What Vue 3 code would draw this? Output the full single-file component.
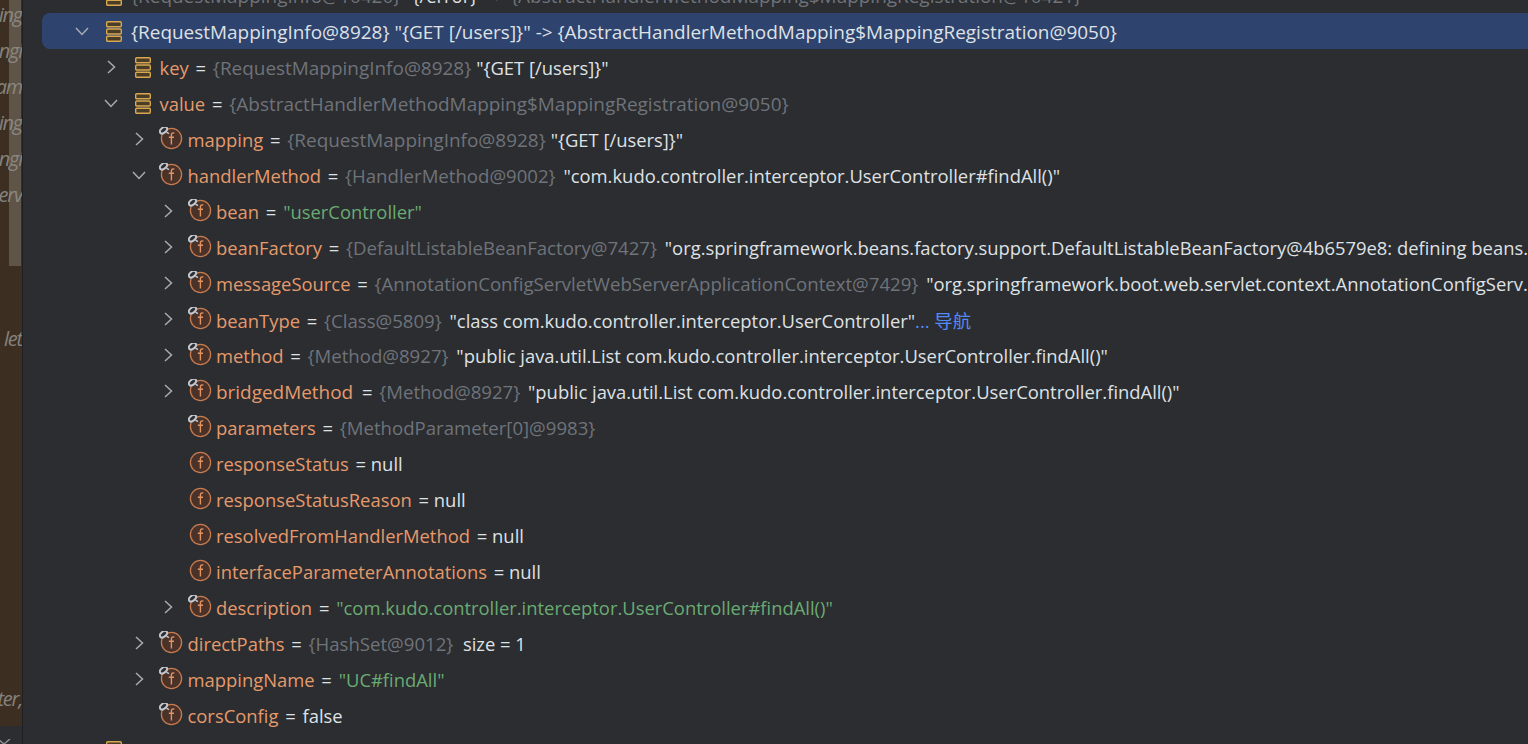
<template>
  <div class="window">
    <aside class="gutter">
      <div class="gutter-list">
        <div v-for="(t, i) in gutterRows" :key="i" class="gutter-row">{{ t }}</div>
      </div>
      <div class="scroll-thumb"></div>
      <div class="gutter-foot">
        <svg width="12" height="6" viewBox="0 0 12 6"><path d="M-2 0l6 5 6-5" fill="none" stroke="#8c8f94" stroke-width="1.5"/></svg>
      </div>
    </aside>
    <main class="tree">
      <div v-for="(row, i) in rows" :key="i" class="row" :class="{ selected: row.selected, field: row.icon !== 'entry' }" :style="{ paddingLeft: rowIndent(row) + 'px' }">
        <span class="arrow">
          <svg v-if="row.arrow === 'open'" width="14" height="14" viewBox="0 0 14 14"><path d="M1 4l6 6.500L13 4" fill="none" stroke="#a8abb0" stroke-width="1.500"/></svg>
          <svg v-else-if="row.arrow === 'closed'" width="14" height="14" viewBox="0 0 14 14"><path d="M4 1l6.500 6L4 13" fill="none" stroke="#a8abb0" stroke-width="1.500"/></svg>
        </span>
        <span class="icon">
          <svg v-if="row.icon === 'entry'" width="16" height="21" viewBox="0 0 16 21">
            <g fill="#4a3d28" stroke="#d9a84e" stroke-width="1.400">
              <rect x=".7" y=".7" width="14.600" height="5" rx="1"/>
              <rect x=".7" y="8" width="14.600" height="5" rx="1"/>
              <rect x=".7" y="15.300" width="14.600" height="5" rx="1"/>
            </g>
          </svg>
          <svg v-else width="24" height="24" viewBox="0 0 24 24">
            <circle cx="12.500" cy="11.500" r="10.100" fill="#4a3228" stroke="#c77b50" stroke-width="1.300"/>
            <path d="M15.300 6.300c-.5-.6-2.600-.7-2.900 1V17.500M9.800 10.300h5.200" fill="none" stroke="#e09465" stroke-width="1.400"/>
            <g v-if="row.icon === 'final'">
              <ellipse cx="4.500" cy="3.200" rx="4.100" ry="2.500" transform="rotate(-40 4.500 3.200)" fill="#2b2d30" stroke="#c3c7cd" stroke-width="2"/>
              <path d="M7.500 5.200l2.500 1.500" stroke="#c3c7cd" stroke-width="1.500"/>
            </g>
          </svg>
        </span>
        <span class="text">
          <span v-if="row.name" class="name" :class="{ long: row.long }">{{ row.name }}</span>
          <span v-if="row.name" class="op"> = </span>
          <span v-for="(p, j) in row.parts" :key="j" :class="p[0]">{{ p[1] }}</span>
        </span>
      </div>
    </main>
  </div>
</template>

<script setup>
const gutterRows = ['ing', 'ngi', 'am', 'ing', 'ngi', 'erv', '', '', '', 'let', '', '', '', '', '', '', '', '', '', 'ter,']

const F = 'final'
const rows = [
  { depth: 0, arrow: 'open', icon: 'entry', parts: [['ref wider', '{RequestMappingInfo@10420} '], ['white', '"{/error}" '], ['ref wider', '-> {AbstractHandlerMethodMapping$MappingRegistration@10421}']] },
  { depth: 0, arrow: 'open', icon: 'entry', selected: true, parts: [['white wider', '{RequestMappingInfo@8928} "{GET [/users]}" -> {AbstractHandlerMethodMapping$MappingRegistration@9050}']] },
  { depth: 1, arrow: 'closed', icon: 'entry', name: 'key', parts: [['ref wider', '{RequestMappingInfo@8928} '], ['white', '"{GET [/users]}"']] },
  { depth: 1, arrow: 'open', icon: 'entry', name: 'value', parts: [['ref wider', '{AbstractHandlerMethodMapping$MappingRegistration@9050}']] },
  { depth: 2, arrow: 'closed', icon: F, name: 'mapping', parts: [['ref wider', '{RequestMappingInfo@8928} '], ['white', '"{GET [/users]}"']] },
  { depth: 2, arrow: 'open', icon: F, name: 'handlerMethod', parts: [['ref wide', '{HandlerMethod@9002} '], ['white', '"com.kudo.controller.interceptor.UserController#findAll()"']] },
  { depth: 3, arrow: 'closed', icon: F, name: 'bean', parts: [['str', '"userController"']] },
  { depth: 3, arrow: 'closed', icon: F, name: 'beanFactory', parts: [['ref wide', '{DefaultListableBeanFactory@7427} '], ['white', '"org.springframework.beans.factory.support.DefaultListableBeanFactory@4b6579e8: defining beans...']] },
  { depth: 3, arrow: 'closed', icon: F, name: 'messageSource', parts: [['ref wide', '{AnnotationConfigServletWebServerApplicationContext@7429} '], ['white', '"org.springframework.boot.web.servlet.context.AnnotationConfigServ...']] },
  { depth: 3, arrow: 'closed', icon: F, name: 'beanType', parts: [['ref wide', '{Class@5809} '], ['white', '"class com.kudo.controller.interceptor.UserController"'], ['link', '... 导航']] },
  { depth: 3, arrow: 'closed', icon: F, name: 'method', parts: [['ref wide', '{Method@8927} '], ['white', '"public java.util.List com.kudo.controller.interceptor.UserController.findAll()"']] },
  { depth: 3, arrow: 'closed', icon: F, name: 'bridgedMethod', long: true, parts: [['ref wide', '{Method@8927} '], ['white', '"public java.util.List com.kudo.controller.interceptor.UserController.findAll()"']] },
  { depth: 3, icon: F, name: 'parameters', parts: [['ref wide', '{MethodParameter[0]@9983}']] },
  { depth: 3, icon: 'field', name: 'responseStatus', parts: [['white nil', 'null']] },
  { depth: 3, icon: 'field', name: 'responseStatusReason', parts: [['white nil', 'null']] },
  { depth: 3, icon: 'field', name: 'resolvedFromHandlerMethod', parts: [['white nil', 'null']] },
  { depth: 3, icon: 'field', name: 'interfaceParameterAnnotations', parts: [['white nil', 'null']] },
  { depth: 3, arrow: 'closed', icon: F, name: 'description', parts: [['str', '"com.kudo.controller.interceptor.UserController#findAll()"']] },
  { depth: 2, arrow: 'closed', icon: F, name: 'directPaths', parts: [['ref wide', '{HashSet@9012} '], ['white nil', ' size = 1']] },
  { depth: 2, arrow: 'closed', icon: F, name: 'mappingName', parts: [['str', '"UC#findAll"']] },
  { depth: 2, icon: F, name: 'corsConfig', parts: [['white', 'false']] },
  { depth: 0, icon: 'entry', parts: [] }
]

// selected row starts 19px further right because of its rounded highlight
function rowIndent(row) {
  return 52 + row.depth * 28.5 - (row.selected ? 19 : 0)
}
</script>

<style>
html, body { margin: 0; background: #2b2d30; overflow: hidden; }
</style>

<style scoped>
.window { display: flex; width: 1528px; height: 744px; overflow: hidden; background: #2b2d30; font-family: "Open Sans", "Noto Sans CJK SC", sans-serif; font-size: 18.4px; }
.gutter { position: relative; flex: none; width: 22px; background: #3c2f22; border-right: 1px solid #1e1f22; overflow: hidden; }
.gutter-list { margin-top: -3px; }
.gutter-row { height: 36px; line-height: 36px; width: 22px; white-space: nowrap; display: flex; justify-content: flex-end; font-size: 20px; letter-spacing: -1.2px; font-style: italic; color: #85827c; overflow: hidden; }
.scroll-thumb { position: absolute; left: 9px; top: 0; width: 12px; height: 266px; background: rgba(150, 145, 135, .38); }
.gutter-foot { position: absolute; left: 0; right: 0; bottom: 0; height: 18px; background: #2b2d30; padding-top: 12px; box-sizing: border-box; line-height: 0; }
.tree { flex: 1; margin-top: -23px; min-width: 0; }
.row { display: flex; align-items: center; height: 36px; white-space: nowrap; overflow: hidden; box-sizing: border-box; }
.row.selected { background: #2e436e; border-radius: 8px 0 0 8px; margin-left: 19px; }
.arrow { flex: none; width: 14px; height: 14px; display: flex; }
.icon { flex: none; width: 24px; height: 24px; margin-left: 13px; display: flex; align-items: center; justify-content: center; }
.text { margin-left: 5px; padding-top: 1px; white-space: pre; }
.row.field .text { margin-left: 4.5px; }
.name { color: #e69a6c; }
.name.long { font-size: 18.95px; padding-right: 2px; }
.op, .white { color: #dfe1e5; }
.op { padding: 0 2px; }
.nil { margin-left: -2px; }
.ref { color: #6f737a; }
.wide { font-size: 18.6px; }
.wide + .white { margin-left: 3px; }
.wide + .white.nil { margin-left: 0; }
.wider { font-size: 18.95px; }
.str { color: #6aab73; }
.link { color: #548af7; }
</style>
